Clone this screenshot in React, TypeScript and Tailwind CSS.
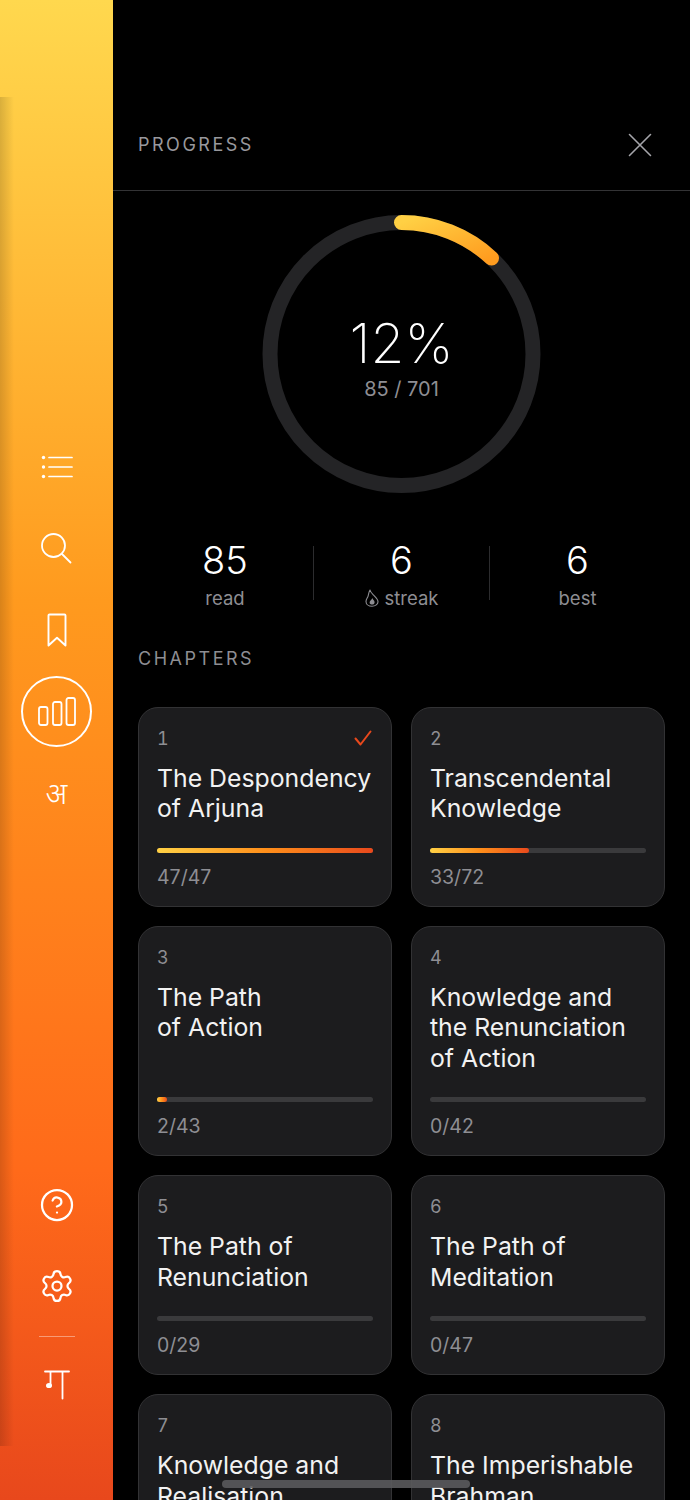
import { CircleHelp, Settings } from "lucide-react";

const chapters = [
  { id: 1, lines: ["The Despondency", "of Arjuna"], read: 47, total: 47 },
  { id: 2, lines: ["Transcendental", "Knowledge"], read: 33, total: 72 },
  { id: 3, lines: ["The Path", "of Action"], read: 2, total: 43 },
  { id: 4, lines: ["Knowledge and", "the Renunciation", "of Action"], read: 0, total: 42 },
  { id: 5, lines: ["The Path of", "Renunciation"], read: 0, total: 29 },
  { id: 6, lines: ["The Path of", "Meditation"], read: 0, total: 47 },
  { id: 7, lines: ["Knowledge and", "Realisation"], read: 0, total: 30 },
  { id: 8, lines: ["The Imperishable", "Brahman"], read: 0, total: 28 },
];

const stats = [
  { value: "85", label: "read" },
  { value: "6", label: "streak", flame: true },
  { value: "6", label: "best" },
];

const ListIcon = () => (
  <svg width="32" height="24" viewBox="0 0 32 24" fill="none" stroke="#fff" strokeWidth="1.700" strokeLinecap="round">
    <path d="M8 2.500h23M8 12h23M8 21.500h23" />
    <circle cx="2.500" cy="2.500" r="1.700" fill="#fff" stroke="none" />
    <circle cx="2.500" cy="12" r="1.700" fill="#fff" stroke="none" />
    <circle cx="2.500" cy="21.500" r="1.700" fill="#fff" stroke="none" />
  </svg>
);

const SearchIcon = () => (
  <svg width="31" height="31" viewBox="0 0 31 31" fill="none" stroke="#fff" strokeWidth="1.800" strokeLinecap="round">
    <circle cx="12.500" cy="12.500" r="11.500" />
    <path d="M21 21l8.500 8.500" />
  </svg>
);

const BookmarkIcon = () => (
  <svg width="20" height="34" viewBox="0 0 20 34" fill="none" stroke="#fff" strokeWidth="1.900" strokeLinejoin="round">
    <path d="M2.500 1.500h15a1 1 0 0 1 1 1v30l-8.500-7.800-8.500 7.800v-30a1 1 0 0 1 1-1z" />
  </svg>
);

const BarsIcon = () => (
  <svg width="38" height="29" viewBox="0 0 38 29" fill="none" stroke="#fff" strokeWidth="1.800">
    <rect x="1" y="10" width="8.500" height="18" rx="2" />
    <rect x="15" y="5" width="8.500" height="23" rx="2" />
    <rect x="28.500" y="1" width="8.500" height="27" rx="2" />
  </svg>
);

const GaLogo = () => (
  <svg width="26" height="30" viewBox="0 0 26 30" fill="none" stroke="#fff" strokeWidth="1.800" strokeLinecap="round">
    <path d="M1 1.500h24M18.500 1.500v27M6.500 1.500v14" />
    <ellipse cx="5" cy="15.500" rx="3" ry="2.600" fill="#fff" stroke="none" />
  </svg>
);

const CloseIcon = () => (
  <svg width="24" height="24" viewBox="0 0 24 24" fill="none" stroke="#a5a5aa" strokeWidth="1.600" strokeLinecap="round">
    <path d="M1.500 1.500l21 21M22.500 1.500l-21 21" />
  </svg>
);

const FlameIcon = () => (
  <svg width="14" height="18" viewBox="0 0 14 18" fill="none" stroke="#8e8e93" strokeWidth="1.100" strokeLinejoin="round">
    <path d="M5 1c.6 2.600 1.900 3.500 4.300 5.900 2.300 2.300 3.700 3.800 3.700 5.800 0 2.500-2.600 4.600-6 4.600s-6-2.100-6-4.900c0-2.500 1.500-3.400 2.100-5.300C3.600 5 3.900 2.800 5 1z" />
    <path d="M7.300 9c.3 1.300 2.300 2.300 2.300 4.300 0 1.400-1.100 2.300-2.500 2.300s-2.500-.9-2.500-2.200C4.600 11.600 6.900 11 7.300 9z" fill="#8e8e93" stroke="none" />
  </svg>
);

const ProgressRing = () => (
  <svg width="280" height="280" viewBox="0 0 280 280" fill="none">
    <defs>
      <linearGradient id="ring" x1="0" y1="0" x2="1" y2="1">
        <stop offset="0" stopColor="#ffd044" />
        <stop offset="1" stopColor="#ff9c1f" />
      </linearGradient>
    </defs>
    <circle cx="139.500" cy="140" r="131.500" stroke="#242426" strokeWidth="15" />
    <path d="M139.500 8.500A131.500 131.500 0 0 1 229.500 44.100" stroke="url(#ring)" strokeWidth="15" strokeLinecap="round" />
  </svg>
);

const ChapterCard = ({ chapter }: { chapter: (typeof chapters)[number] }) => {
  const pct = (chapter.read / chapter.total) * 100;
  return (
    <div className="flex flex-col rounded-[20px] border border-[#323234] bg-[#1c1c1e] px-[18px] pt-[18px] pb-[17.500px]">
      <div className="flex h-[24px] items-center justify-between text-[18px] text-[#8e8e93] tabular-nums">
        <span>{chapter.id}</span>
        {chapter.read === chapter.total && (
          <svg width="18" height="16" viewBox="0 0 18 16" fill="none" stroke="#e8481c" strokeWidth="2" strokeLinecap="round" strokeLinejoin="round" className="mr-[1px]">
            <path d="M1.500 8.500l5 6L16.500 1.500" />
          </svg>
        )}
      </div>
      <div className="mt-[13px] mb-[24px] text-[24.800px] leading-[30.250px] text-[#f2f2f2]">
        {chapter.lines.map((line) => (
          <div key={line}>{line}</div>
        ))}
      </div>
      <div className="mt-auto h-[5px] w-full rounded-full bg-[#3a3a3c]">
        {pct > 0 && (
          <div className="h-[5px] rounded-full bg-gradient-to-r from-[#ffd044] via-[#ff8f1a] to-[#e8481c]" style={{ width: `${pct}%` }} />
        )}
      </div>
      <div className="mt-[12px] h-[24px] text-[19.500px] leading-[24px] text-[#8e8e93]">
        {chapter.read}/{chapter.total}
      </div>
    </div>
  );
};

export default function App() {
  return (
    <div className="relative flex h-[1500px] w-[690px] overflow-hidden bg-black font-['Inter',sans-serif] [font-optical-sizing:none]">
      {/* Side rail */}
      <aside className="relative flex w-[113px] shrink-0 flex-col items-center bg-[linear-gradient(to_bottom,#ffd84e_0%,#ff9a1e_40%,#ff6a1a_78%,#e8481c_100%)] text-white">
        <div className="absolute top-[97px] left-0 h-[1349px] w-[14px] bg-gradient-to-r from-black/15 to-transparent" />
        <div className="mt-[426px] flex w-full flex-col items-center">
          <div className="flex h-[81.500px] items-center justify-center"><ListIcon /></div>
          <div className="flex h-[81.500px] items-center justify-center"><SearchIcon /></div>
          <div className="flex h-[81.500px] items-center justify-center"><BookmarkIcon /></div>
          <div className="flex h-[81.500px] items-center justify-center">
            <div className="flex h-[71px] w-[71px] items-center justify-center rounded-full border-2 border-white"><BarsIcon /></div>
          </div>
          <div className="flex h-[81.500px] items-center justify-center font-['Noto_Sans',sans-serif] text-[30px] font-light">अ</div>
        </div>
        <div className="mt-auto mb-[68px] flex w-full flex-col items-center">
          <div className="flex h-[81px] items-center justify-center"><CircleHelp size={36} strokeWidth={1.500} /></div>
          <div className="flex h-[81px] items-center justify-center"><Settings size={36} strokeWidth={1.500} /></div>
          <div className="mt-[10px] h-[1px] w-[36px] bg-white/40" />
          <div className="flex h-[95px] items-center justify-center"><GaLogo /></div>
        </div>
      </aside>

      {/* Progress panel */}
      <main className="flex-1">
        <header className="flex h-[191px] items-end justify-between border-b border-[#333335] pr-[38px] pb-[33px] pl-[25px]">
          <span className="text-[18px] leading-[24px] tracking-[0.14em] text-[#98989d]">PROGRESS</span>
          <CloseIcon />
        </header>

        <div className="mt-[23px] flex justify-center">
          <div className="relative h-[280px] w-[280px]">
            <ProgressRing />
            <div className="absolute inset-0 flex flex-col items-center justify-center pt-[6px]">
              <div className="text-[55px] leading-[60px] [font-weight:250] text-white">12%</div>
              <div className="mt-[3px] text-[20px] leading-[26px] text-[#8e8e93]">85 / 701</div>
            </div>
          </div>
        </div>

        <div className="mt-[52px] grid grid-cols-3 pr-[25px] pl-[24px]">
          {stats.map((stat, index) => (
            <div key={stat.label} className={`flex h-[54px] flex-col items-center ${index > 0 ? "border-l border-[#2c2c2e]" : ""}`}>
              <div className="mt-[-9px] text-[38px] leading-[46px] font-light text-white">{stat.value}</div>
              <div className="mt-[3px] flex items-center gap-[6px] text-[18.500px] leading-[24px] text-[#8e8e93]">
                {stat.flame && <FlameIcon />}
                {stat.label}
              </div>
            </div>
          ))}
        </div>

        <div className="mt-[47px] pl-[25px] text-[18px] leading-[24px] tracking-[0.14em] text-[#8e8e93]">CHAPTERS</div>

        <div className="mt-[36px] grid grid-cols-2 gap-[19px] pr-[25px] pl-[25px]">
          {chapters.map((chapter) => (
            <ChapterCard key={chapter.id} chapter={chapter} />
          ))}
        </div>
      </main>

      {/* Home indicator */}
      <div className="absolute top-[1480px] left-[222px] h-[8px] w-[248px] rounded-full bg-[#5a5a5c]/90" />
    </div>
  );
}
